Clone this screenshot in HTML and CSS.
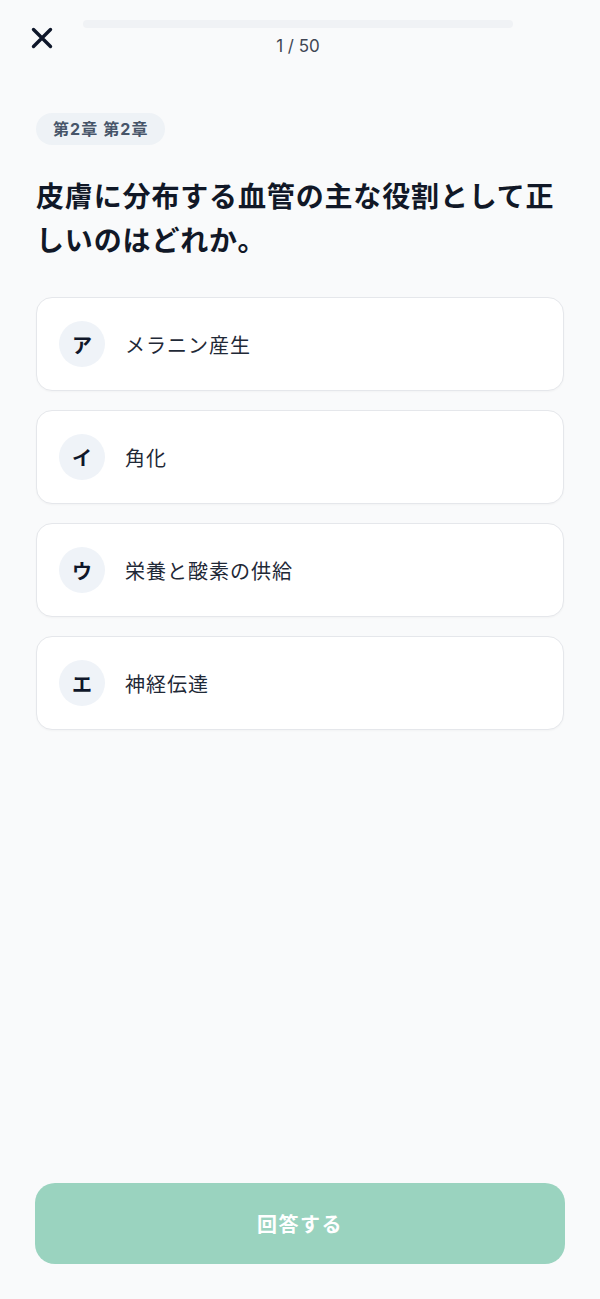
FILE: index.html
```html
<!DOCTYPE html>
<html lang="ja">
<head>
<meta charset="utf-8">
<title>Quiz</title>
<link rel="stylesheet" href="styles.css">
</head>
<body>
<div class="page">
  <header class="header">
    <button class="close" aria-label="閉じる">
      <svg width="24" height="24" viewBox="0 0 24 24" fill="none" stroke="#0f172a" stroke-width="3.4" stroke-linecap="round">
        <path d="M3.5 3.5 L20.5 20.5 M20.5 3.5 L3.5 20.5"/>
      </svg>
    </button>
    <div class="progress">
      <div class="bar"><div class="fill" style="width:0%"></div></div>
      <div class="count">1 / 50</div>
    </div>
  </header>

  <main class="main">
    <span class="chip">第2章 第2章</span>
    <h1 class="question">皮膚に分布する血管の主な役割として正しいのはどれか。</h1>

    <div class="options">
      <div class="option"><span class="badge">ア</span><span class="label">メラニン産生</span></div>
      <div class="option"><span class="badge">イ</span><span class="label">角化</span></div>
      <div class="option"><span class="badge">ウ</span><span class="label">栄養と酸素の供給</span></div>
      <div class="option"><span class="badge">エ</span><span class="label">神経伝達</span></div>
    </div>
  </main>

  <footer class="footer">
    <button class="submit">回答する</button>
  </footer>
</div>
</body>
</html>
```

FILE: styles.css
```css
* { box-sizing: border-box; }

html, body {
  margin: 0;
  padding: 0;
  background: #f9fafb;
  font-family: "Inter", "Noto Sans CJK JP", sans-serif;
  color: #0f172a;
}

.page {
  min-height: 1299px;
  display: flex;
  flex-direction: column;
}

.header {
  display: flex;
  align-items: flex-start;
  padding: 20px 87px 0 30px;
}

.close {
  width: 24px;
  height: 24px;
  margin-top: 6px;
  padding: 0;
  border: 0;
  background: none;
  display: flex;
}

.progress {
  flex: 1;
  margin-left: 29px;
  display: flex;
  flex-direction: column;
  align-items: center;
}

.bar {
  width: 100%;
  height: 8px;
  border-radius: 4px;
  background: #f0f2f5;
  overflow: hidden;
}

.fill {
  height: 100%;
  background: #34b38a;
}

.count {
  margin-top: 7px;
  font-size: 17px;
  line-height: 22px;
  color: #3f4654;
}

.main {
  padding: 0 36px;
  display: flex;
  flex-direction: column;
  align-items: flex-start;
}

.chip {
  margin-top: 56px;
  height: 32px;
  padding: 0 16px 0 17px;
  border-radius: 16px;
  background: #eef2f6;
  color: #475569;
  font-size: 16px;
  font-weight: 700;
  line-height: 32px;
  letter-spacing: 1.1px;
}

.question {
  margin: 30px 0 0;
  font-size: 28px;
  line-height: 44px;
  font-weight: 700;
  letter-spacing: 0.85px;
  color: #111827;
}

.options {
  margin-top: 34px;
  width: 100%;
  display: flex;
  flex-direction: column;
  gap: 19px;
}

.option {
  height: 94px;
  display: flex;
  align-items: center;
  gap: 20px;
  padding: 0 22px;
  background: #ffffff;
  border: 1px solid #e5e7eb;
  border-radius: 16px;
  box-shadow: 0 1px 2px rgba(15, 23, 42, 0.03);
}

.badge {
  width: 46px;
  height: 46px;
  border-radius: 50%;
  background: #eff3f8;
  display: flex;
  align-items: center;
  justify-content: center;
  font-size: 20px;
  font-weight: 700;
  color: #0f172a;
}

.label {
  font-size: 20px;
  letter-spacing: 1px;
  color: #1f2937;
}

.footer {
  margin-top: auto;
  padding: 0 35px 35px;
}

.submit {
  width: 100%;
  height: 81px;
  border: 0;
  border-radius: 20px;
  background: #9ad3bf;
  color: #ffffff;
  font-family: "Inter", "Noto Sans CJK JP", sans-serif;
  font-size: 20px;
  font-weight: 700;
  letter-spacing: 1.5px;
}
```
